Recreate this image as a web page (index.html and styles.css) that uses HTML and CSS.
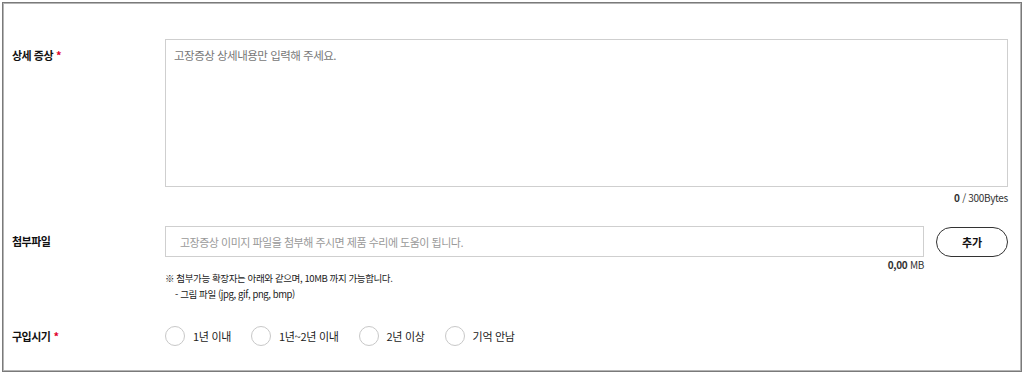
FILE: index.html
```html
<!DOCTYPE html>
<html lang="ko">
<head>
<meta charset="utf-8">
<link rel="stylesheet" href="styles.css">
</head>
<body>
<div class="frame">
  <div class="row row-detail">
    <div class="label">상세 증상<span class="req">*</span></div>
    <div class="field">
      <div class="textarea"><span class="ph">고장증상 상세내용만 입력해 주세요.</span></div>
      <div class="counter"><b>0</b> / 300Bytes</div>
    </div>
  </div>
  <div class="row row-file">
    <div class="label">첨부파일</div>
    <div class="field">
      <div class="file-line">
        <div class="file-col">
          <div class="input"><span class="ph2">고장증상 이미지 파일을 첨부해 주시면 제품 수리에 도움이 됩니다.</span></div>
          <div class="size"><b>0,00</b> MB</div>
        </div>
        <div class="btn">추가</div>
      </div>
      <div class="note">※ 첨부가능 확장자는 아래와 같으며, 10MB 까지 가능합니다.</div>
      <div class="note note2">- 그림 파일 (jpg, gif, png, bmp)</div>
    </div>
  </div>
  <div class="row row-radio">
    <div class="label">구입시기<span class="req">*</span></div>
    <div class="field radios">
      <label class="radio"><span class="circle"></span>1년 이내</label>
      <label class="radio"><span class="circle"></span>1년~2년 이내</label>
      <label class="radio"><span class="circle"></span>2년 이상</label>
      <label class="radio"><span class="circle"></span>기억 안남</label>
    </div>
  </div>
</div>
</body>
</html>
```
FILE: styles.css
```css
html, body {
  margin: 0;
  padding: 0;
  background: #fff;
}
body {
  font-family: "Noto Sans CJK KR", "Noto Sans", sans-serif;
  color: #222;
}
.frame {
  margin: 2px;
  width: 1020px;
  height: 370px;
  box-sizing: border-box;
  border: 1px solid #7a7a7a;
  box-shadow: inset 0 0 0 1px #b5b5b5;
  padding: 36px 13px 0 9px;
}
.row {
  display: flex;
}
.label {
  width: 153px;
  flex: none;
  font-size: 11px;
  font-weight: bold;
  letter-spacing: -0.5px;
  color: #111;
  padding-top: 8px;
  line-height: 16px;
}
.req {
  color: #e0002a;
  margin-left: 3px;
}
.field {
  flex: 1;
}
.textarea {
  height: 148px;
  box-sizing: border-box;
  border: 1px solid #cfcfcf;
  padding: 8px 8px;
}
.ph {
  font-size: 11.5px;
  letter-spacing: -0.5px;
  color: #777;
  line-height: 16px;
  display: block;
  margin-top: -1px;
}
.counter {
  text-align: right;
  font-size: 10px;
  letter-spacing: -0.3px;
  color: #333;
  line-height: 14px;
  margin-top: 4px;
}
.row-file {
  margin-top: 21px;
}
.row-file .label {
  padding-top: 7px;
}
.file-line {
  display: flex;
  gap: 12px;
}
.file-col {
  flex: 1;
}
.input {
  height: 31px;
  box-sizing: border-box;
  border: 1px solid #cfcfcf;
  padding: 0 14px;
  display: flex;
  align-items: center;
}
.ph2 {
  font-size: 11px;
  letter-spacing: -0.5px;
  color: #999;
}
.size {
  text-align: right;
  font-size: 10px;
  letter-spacing: -0.3px;
  color: #333;
  line-height: 14px;
  margin-top: 1px;
}
.btn {
  width: 72px;
  height: 30px;
  box-sizing: border-box;
  border: 1px solid #333;
  border-radius: 15px;
  display: flex;
  align-items: center;
  justify-content: center;
  font-size: 11px;
  font-weight: bold;
  color: #111;
  margin-top: 1px;
}
.note {
  font-size: 9.5px;
  letter-spacing: -0.4px;
  color: #222;
  line-height: 16px;
  margin-top: -2px;
}
.note2 {
  margin-top: 0;
  padding-left: 10px;
}
.row-radio {
  margin-top: 24px;
  align-items: center;
}
.row-radio .label {
  padding-top: 0;
}
.radios {
  display: flex;
  align-items: center;
}
.radio {
  display: flex;
  align-items: center;
  font-size: 11px;
  letter-spacing: -0.3px;
  color: #222;
  margin-right: 20px;
}
.circle {
  width: 20px;
  height: 20px;
  box-sizing: border-box;
  border: 1px solid #c8c8c8;
  border-radius: 50%;
  margin-right: 8px;
}
```
